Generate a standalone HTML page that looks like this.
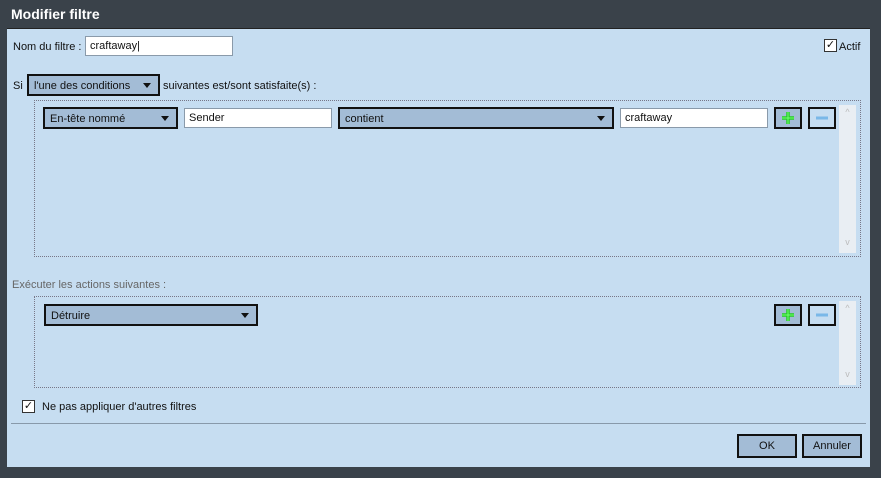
<!DOCTYPE html>
<html><head><style>
*{box-sizing:border-box;margin:0;padding:0}
body{width:881px;height:478px;background:#3a424a;font-family:"Liberation Sans",sans-serif;font-size:11px;color:#111;position:relative;overflow:hidden}
.a{position:absolute}
.title{left:11px;top:6px;color:#fff;font-weight:bold;font-size:14px}
.panel{left:7px;top:28px;width:863px;height:439px;background:#c6ddf1;border-top:1px solid #222}
.inp{position:absolute;background:#fff;border:1px solid #8a9aaa;height:20px;padding:3px 4px;font-size:11px}
.sel{position:absolute;background:#a3bcd6;border:2px solid #111;height:22px;padding:4px 5px;font-size:11px}
.sel:after{content:"";position:absolute;right:7px;top:7px;border-left:4px solid transparent;border-right:4px solid transparent;border-top:5px solid #111}
.box{position:absolute;border:1px dotted #778;}
.btn{position:absolute;width:28px;height:22px;border:2px solid #111;background:#a3bcd6}
.sb{position:absolute;width:17px;background:#e9eef3;color:#bbb;font-size:9px;text-align:center}
.cb{position:absolute;width:13px;height:13px;border:1px solid #333;background:#fff;font-size:11px;line-height:11px;text-align:center}
.pb{position:absolute;height:24px;border:2px solid #111;background:#a3bcd6;font-size:11px;text-align:center;line-height:20px}
</style></head><body>
<div class="a title">Modifier filtre</div>
<div class="a panel">
<div class="a" style="left:6px;top:12px">Nom du filtre :</div>
<div class="inp" style="left:78px;top:7px;width:148px">craftaway|</div>
<div class="cb" style="left:817px;top:10px">✓</div>
<div class="a" style="left:832px;top:12px">Actif</div>
<div class="a" style="left:6px;top:51px">Si</div>
<div class="sel" style="left:20px;top:45px;width:133px">l'une des conditions</div>
<div class="a" style="left:156px;top:51px">suivantes est/sont satisfaite(s) :</div>
<div class="box" style="left:27px;top:71px;width:827px;height:157px"></div>
<div class="sel" style="left:36px;top:78px;width:135px">En-tête nommé</div>
<div class="inp" style="left:177px;top:79px;width:148px">Sender</div>
<div class="sel" style="left:331px;top:78px;width:276px">contient</div>
<div class="inp" style="left:613px;top:79px;width:148px">craftaway</div>
<div class="btn" style="left:767px;top:78px"><svg width="24" height="18"><path d="M12 3v12M6 9h12" stroke="#2c2" stroke-width="3.5"/><path d="M12 3v12M6 9h12" stroke="#7f7" stroke-width="1"/></svg></div>
<div class="btn" style="left:801px;top:78px;background:#c6ddf1"><svg width="24" height="18"><path d="M6 9h12" stroke="#7ab8e8" stroke-width="3"/></svg></div>
<div class="sb" style="left:832px;top:76px;height:148px"><div style="margin-top:2px">^</div><div style="margin-top:120px">v</div></div>
<div class="a" style="left:5px;top:250px;color:#666">Exécuter les actions suivantes :</div>
<div class="box" style="left:27px;top:267px;width:827px;height:92px"></div>
<div class="sel" style="left:37px;top:275px;width:214px">Détruire</div>
<div class="btn" style="left:767px;top:275px"><svg width="24" height="18"><path d="M12 3v12M6 9h12" stroke="#2c2" stroke-width="3.5"/><path d="M12 3v12M6 9h12" stroke="#7f7" stroke-width="1"/></svg></div>
<div class="btn" style="left:801px;top:275px;background:#c6ddf1"><svg width="24" height="18"><path d="M6 9h12" stroke="#7ab8e8" stroke-width="3"/></svg></div>
<div class="sb" style="left:832px;top:272px;height:84px"><div style="margin-top:2px">^</div><div style="margin-top:56px">v</div></div>
<div class="cb" style="left:15px;top:371px">✓</div>
<div class="a" style="left:35px;top:372px">Ne pas appliquer d'autres filtres</div>
<div class="a" style="left:4px;top:394px;width:855px;height:1px;background:#8899aa"></div>
<div class="pb" style="left:730px;top:405px;width:60px">OK</div>
<div class="pb" style="left:795px;top:405px;width:60px">Annuler</div>
</div>
</body></html>
